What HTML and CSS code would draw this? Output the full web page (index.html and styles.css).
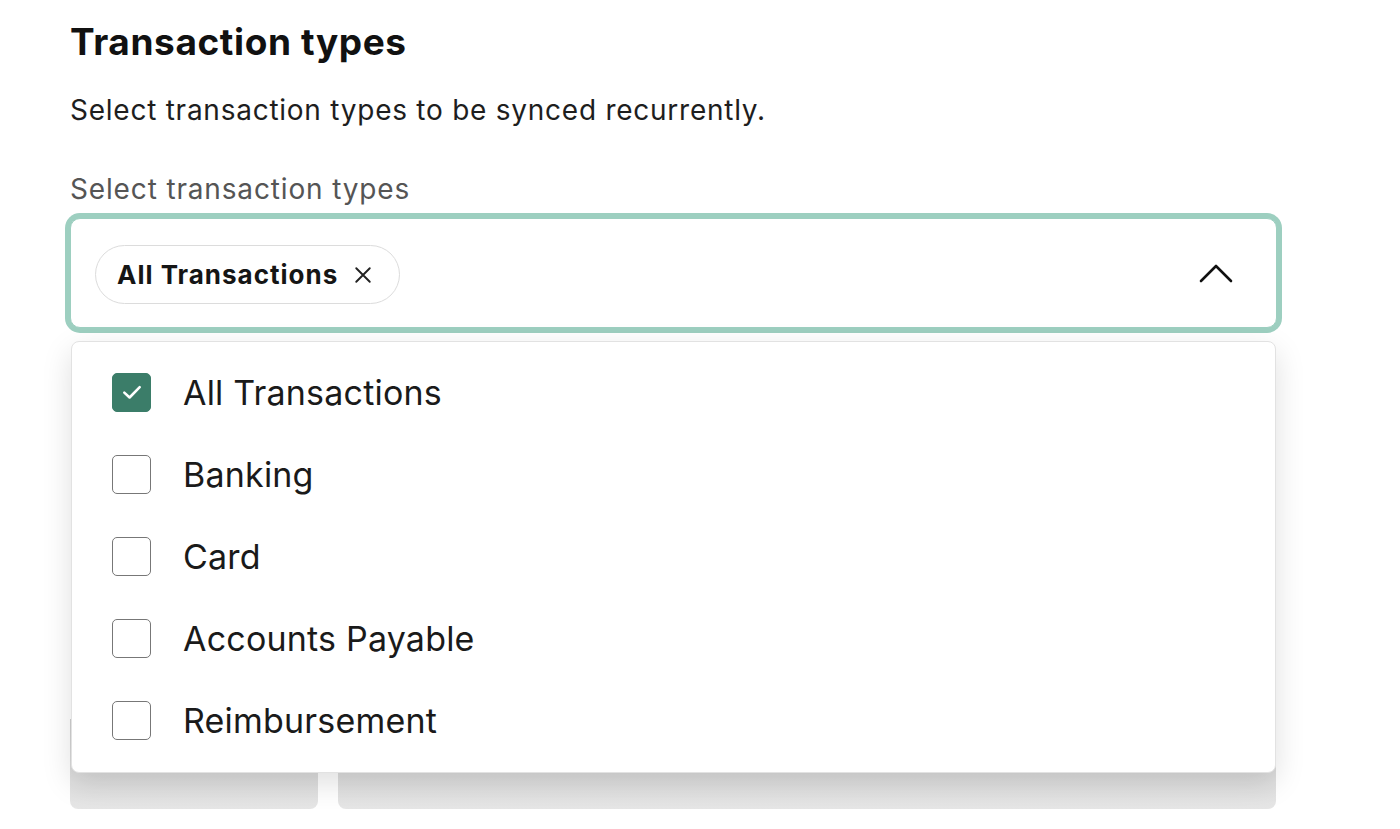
FILE: index.html
```html
<!DOCTYPE html>
<html lang="en">
<head>
<meta charset="utf-8">
<title>Transaction types</title>
<link rel="stylesheet" href="styles.css">
</head>
<body>
<main class="page">
  <h1 class="title">Transaction types</h1>
  <p class="desc">Select transaction types to be synced recurrently.</p>
  <div class="field-group">
    <label class="label">Select transaction types</label>
    <div class="select">
      <div class="chips">
        <span class="chip">All Transactions
          <svg class="chip-x" viewBox="0 0 16 16" width="16" height="16"><path d="M2 2 L14 14 M14 2 L2 14" stroke="#222" stroke-width="1.7" stroke-linecap="round" fill="none"/></svg>
        </span>
      </div>
      <svg class="chevron" viewBox="0 0 34 20" width="34" height="20"><path d="M2 18 L17 3 L32 18" stroke="#111" stroke-width="2.6" fill="none" stroke-linecap="round" stroke-linejoin="round"/></svg>
    </div>
    <div class="under">
      <div class="under-box small"></div>
      <div class="under-box large"></div>
    </div>
    <ul class="menu">
      <li class="option"><span class="check checked"><svg class="tick" viewBox="0 0 20 20"><path d="M3 10.5 L7.8 15 L17 5.5" stroke="#fff" stroke-width="2.3" fill="none" stroke-linecap="round" stroke-linejoin="round"/></svg></span>All Transactions</li>
      <li class="option"><span class="check"></span>Banking</li>
      <li class="option"><span class="check"></span>Card</li>
      <li class="option"><span class="check"></span>Accounts Payable</li>
      <li class="option"><span class="check"></span>Reimbursement</li>
    </ul>
  </div>
</main>
</body>
</html>
```

FILE: styles.css
```css
* { box-sizing: border-box; }
html, body { margin: 0; padding: 0; background: #fff; }
body {
  font-family: Inter, "Noto Sans", "Liberation Sans", sans-serif;
  color: #111;
}
.page {
  padding: 20px 0 0 70px;
  width: 1277px;
}
.title {
  margin: 0;
  font-size: 37px;
  line-height: 44px;
  font-weight: 700;
  letter-spacing: 0.6px;
  color: #111;
}
.desc {
  margin: 29px 0 0;
  font-size: 28px;
  line-height: 34px;
  color: #1e1e1e;
  letter-spacing: 0.75px;
}
.field-group {
  position: relative;
  margin-top: 45px;
}
.label {
  display: block;
  font-size: 28px;
  line-height: 34px;
  color: #555;
  letter-spacing: 0.85px;
}
.select {
  margin-top: 12px;
  height: 110px;
  border: 1px solid #9dcfc0;
  box-shadow: 0 0 0 5px #9dcfc0;
  border-radius: 10px;
  display: flex;
  align-items: center;
  justify-content: space-between;
  padding: 3px 43px 0 24px;
  background: #fff;
}
.chip {
  display: inline-flex;
  align-items: center;
  gap: 16px;
  height: 59px;
  padding: 0 27px 0 21px;
  border: 1.5px solid #dcdcdc;
  border-radius: 30px;
  font-size: 26px;
  font-weight: 700;
  letter-spacing: 1px;
  color: #151515;
}
.chip-x { width: 18px; height: 18px; }
.chevron { display: block; margin-top: -3px; }
.under {
  display: flex;
  gap: 20px;
  margin-top: 13px;
  height: 468px;
  align-items: flex-end;
}
.under-box {
  height: 90px;
  border-radius: 0 0 8px 8px;
  background: linear-gradient(#cfcfcf, #e6e6e6);
}
.under-box.small { width: 248px; }
.under-box.large { flex: 1; margin-right: 1px; }
.menu {
  position: absolute;
  left: 1px;
  right: 1px;
  top: 169px;
  margin: 0;
  padding: 9px 0 11px;
  list-style: none;
  background: #fff;
  border: 1px solid #e2e2e2;
  border-radius: 8px;
  box-shadow: 0 10px 30px rgba(0,0,0,0.13);
}
.option {
  height: 82px;
  display: flex;
  align-items: center;
  padding-left: 40px;
  font-size: 34px;
  color: #1a1a1a;
  letter-spacing: 0.2px;
}
.check {
  width: 39px;
  height: 39px;
  border: 1.5px solid #777;
  border-radius: 5px;
  margin-right: 32px;
  display: flex;
  align-items: center;
  justify-content: center;
  flex-shrink: 0;
}
.check.checked {
  background: #3b7d69;
  border-color: #3b7d69;
}
.tick {
  width: 22px;
  height: 22px;
  display: block;
}
```
